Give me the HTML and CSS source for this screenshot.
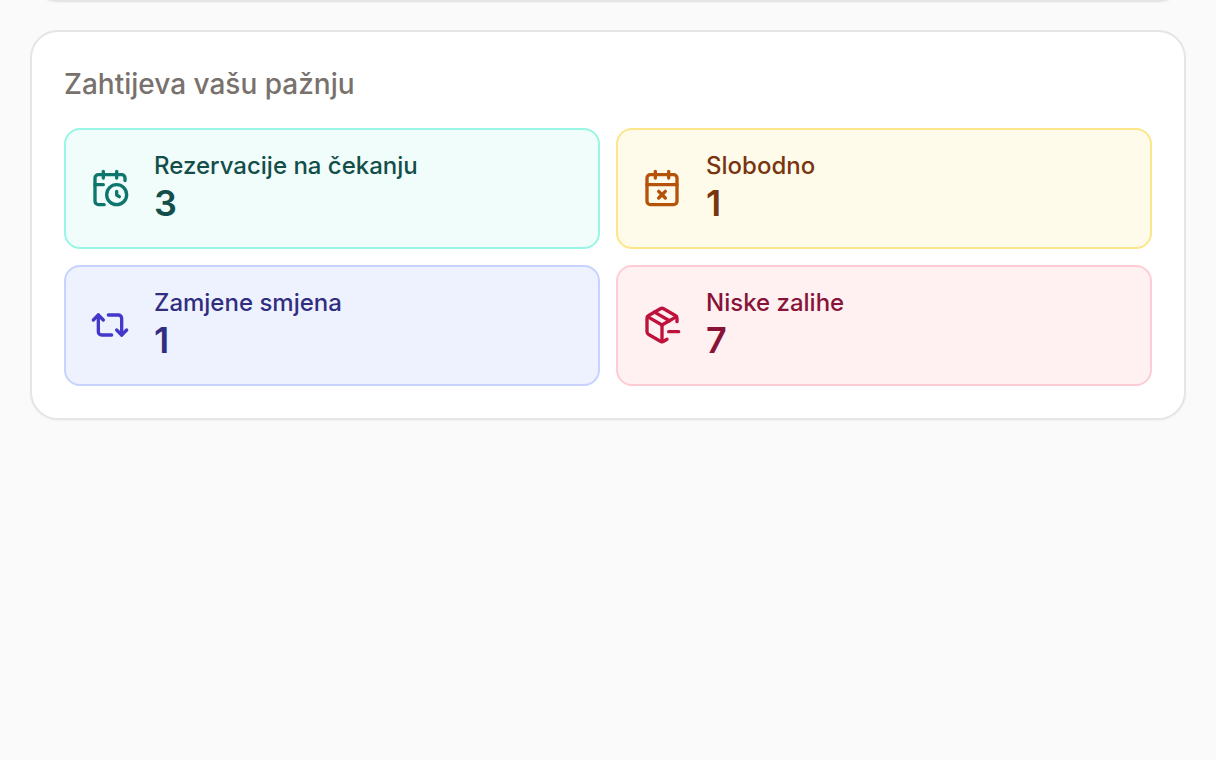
FILE: index.html
```html
<!DOCTYPE html>
<html lang="hr">
<head>
  <meta charset="UTF-8" />
  <meta name="viewport" content="width=device-width, initial-scale=1" />
  <title>Nadzorna ploča</title>
  <link rel="stylesheet" href="styles.css">
</head>
<body>
  <main class="dashboard">
    <!-- End of the panel above -->
    <div class="panel panel-above"></div>

    <section class="panel">
      <h2 class="panel-title">Zahtijeva vašu pažnju</h2>
      <div class="alerts">
        <!-- Pending reservations -->
        <a class="alert teal" href="#">
          <svg class="icon" viewBox="0 0 24 24">
            <path d="M16 14v2.2l1.6 1"/>
            <path d="M16 2v4"/>
            <path d="M21 7.5V6a2 2 0 0 0-2-2H5a2 2 0 0 0-2 2v14a2 2 0 0 0 2 2h3.5"/>
            <path d="M3 10h5"/>
            <path d="M8 2v4"/>
            <circle cx="16" cy="16" r="6"/>
          </svg>
          <div class="alert-text">
            <div class="alert-label">Rezervacije na čekanju</div>
            <div class="alert-count">3</div>
          </div>
        </a>
        <!-- Time off -->
        <a class="alert amber" href="#">
          <svg class="icon" viewBox="0 0 24 24">
            <path d="M8 2v4"/>
            <path d="M16 2v4"/>
            <rect width="18" height="18" x="3" y="4" rx="2"/>
            <path d="M3 10h18"/>
            <path d="m14 14-4 4"/>
            <path d="m10 14 4 4"/>
          </svg>
          <div class="alert-text">
            <div class="alert-label">Slobodno</div>
            <div class="alert-count">1</div>
          </div>
        </a>
        <!-- Shift swaps -->
        <a class="alert indigo" href="#">
          <svg class="icon" viewBox="0 0 24 24">
            <path d="m2 9 3-3 3 3"/>
            <path d="M13 18H7a2 2 0 0 1-2-2V6"/>
            <path d="m22 15-3 3-3-3"/>
            <path d="M11 6h6a2 2 0 0 1 2 2v10"/>
          </svg>
          <div class="alert-text">
            <div class="alert-label">Zamjene smjena</div>
            <div class="alert-count">1</div>
          </div>
        </a>
        <!-- Low stock -->
        <a class="alert rose" href="#">
          <svg class="icon" viewBox="0 0 24 24">
            <path d="M16 16h6"/>
            <path d="M21 10V8a2 2 0 0 0-1-1.73l-7-4a2 2 0 0 0-2 0l-7 4A2 2 0 0 0 3 8v8a2 2 0 0 0 1 1.73l7 4a2 2 0 0 0 2 0l2-1.14"/>
            <path d="m7.5 4.27 9 5.15"/>
            <path d="M3.29 7 12 12l8.71-5"/>
            <path d="M12 22V12"/>
          </svg>
          <div class="alert-text">
            <div class="alert-label">Niske zalihe</div>
            <div class="alert-count">7</div>
          </div>
        </a>
      </div>
    </section>
  </main>
</body>
</html>
```
FILE: styles.css
```css
* {
  box-sizing: border-box;
}
body {
  margin: 0;
  background: #fafafa;
  font-family: Inter, sans-serif;
}
.dashboard {
  display: flex;
  flex-direction: column;
  gap: 28px;
  padding: 0 30px 30px;
  overflow: hidden;
}
.panel {
  background: #fff;
  border: 2px solid #e5e5e5;
  border-radius: 28px;
  padding: 32px;
  box-shadow: 0 1px 2px rgba(0, 0, 0, 0.04);
}
/* only its lower edge is in view */
.panel-above {
  margin-top: -66px;
}
.panel-title {
  margin: 0 0 24px;
  font-size: 28px;
  line-height: 40px;
  font-weight: 500;
  color: #78716c;
}
.alerts {
  display: grid;
  grid-template-columns: 1fr 1fr;
  gap: 16px;
}
.alert {
  display: flex;
  align-items: center;
  gap: 24px;
  padding: 20px 24px 22px;
  border: 2px solid;
  border-radius: 16px;
  text-decoration: none;
}
.icon {
  width: 40px;
  height: 40px;
  flex-shrink: 0;
  fill: none;
  stroke: currentColor;
  stroke-width: 2;
  stroke-linecap: round;
  stroke-linejoin: round;
}
.alert-label {
  font-size: 24px;
  line-height: 32px;
  font-weight: 500;
}
.alert-count {
  font-size: 36px;
  line-height: 43px;
  font-weight: 600;
}
.teal {
  background: #f0fdfa;
  border-color: #99f6e4;
  color: #0f766e;
}
.teal .alert-text {
  color: #134e4a;
}
.amber {
  background: #fffbeb;
  border-color: #fde68a;
  color: #b45309;
}
.amber .alert-text {
  color: #78350f;
}
.indigo {
  background: #eef2ff;
  border-color: #c7d2fe;
  color: #4338ca;
}
.indigo .alert-text {
  color: #312e81;
}
.rose {
  background: #fff1f2;
  border-color: #fecdd3;
  color: #be123c;
}
.rose .alert-text {
  color: #881337;
}
```
